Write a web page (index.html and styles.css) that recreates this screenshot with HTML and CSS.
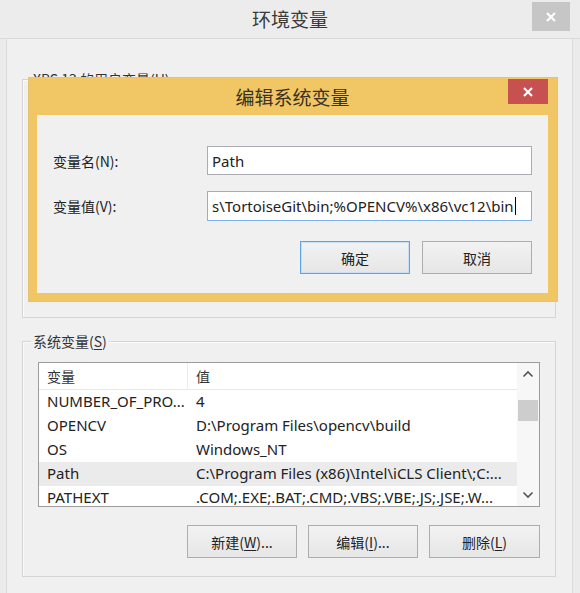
FILE: index.html
```html
<!DOCTYPE html>
<html lang="zh-CN">
<head>
<meta charset="utf-8">
<title>环境变量</title>
<link rel="stylesheet" href="styles.css">
</head>
<body>
<div class="window">
  <div class="titlebar">
    <span class="title">环境变量</span>
    <span class="close-outer">
      <svg width="12" height="12" viewBox="0 0 12 12"><path d="M2 2 L10 10 M10 2 L2 10" stroke="#fff" stroke-width="2.2"/></svg>
    </span>
  </div>
  <div class="panel">
    <div class="group group-user">
      <span class="group-label">XPS 13 的用户变量(<u>U</u>)</span>
    </div>
    <div class="group group-sys">
      <span class="group-label">系统变量(<u>S</u>)</span>
      <div class="listview">
        <div class="list-main">
          <div class="row header"><span class="c1">变量</span><span class="c2">值</span></div>
          <div class="row"><span class="c1">NUMBER_OF_PRO...</span><span class="c2">4</span></div>
          <div class="row"><span class="c1">OPENCV</span><span class="c2">D:\Program Files\opencv\build</span></div>
          <div class="row"><span class="c1">OS</span><span class="c2">Windows_NT</span></div>
          <div class="row selected"><span class="c1">Path</span><span class="c2">C:\Program Files (x86)\Intel\iCLS Client\;C:...</span></div>
          <div class="row"><span class="c1">PATHEXT</span><span class="c2">.COM;.EXE;.BAT;.CMD;.VBS;.VBE;.JS;.JSE;.W...</span></div>
        </div>
        <div class="scrollbar">
          <span class="arrow">
            <svg width="12" height="8" viewBox="0 0 12 8"><polyline points="1.5,6.5 6,2 10.5,6.5" fill="none" stroke="#555" stroke-width="1.6"/></svg>
          </span>
          <span class="track"><span class="thumb"></span></span>
          <span class="arrow">
            <svg width="12" height="8" viewBox="0 0 12 8"><polyline points="1.5,1.5 6,6 10.5,1.5" fill="none" stroke="#555" stroke-width="1.6"/></svg>
          </span>
        </div>
      </div>
      <div class="btn-row">
        <button class="btn">新建(<u>W</u>)...</button>
        <button class="btn">编辑(<u>I</u>)...</button>
        <button class="btn">删除(<u>L</u>)</button>
      </div>
    </div>
  </div>

  <div class="dialog">
    <div class="dlg-titlebar">
      <span class="dlg-title">编辑系统变量</span>
      <span class="close-red">
        <svg width="12" height="12" viewBox="0 0 12 12"><path d="M2 2 L10 10 M10 2 L2 10" stroke="#fff" stroke-width="2.2"/></svg>
      </span>
    </div>
    <div class="dlg-body">
      <div class="form">
        <label class="form-label">变量名(N):</label>
        <div class="input">Path</div>
        <label class="form-label">变量值(V):</label>
        <div class="input focused"><span class="val">s\TortoiseGit\bin;%OPENCV%\x86\vc12\bin</span><span class="caret"></span></div>
      </div>
      <div class="dlg-buttons">
        <button class="btn default">确定</button>
        <button class="btn">取消</button>
      </div>
    </div>
  </div>
</div>
</body>
</html>
```

FILE: styles.css
```css
* { box-sizing: border-box; }
html, body {
  margin: 0;
  padding: 0;
}
body {
  width: 580px;
  height: 593px;
  overflow: hidden;
  background: #ebebeb;
  font-family: "Noto Sans", "Noto Sans CJK SC", sans-serif;
  font-size: 14px;
  color: #1e1e1e;
}
u { text-decoration: underline; text-underline-offset: 2px; }

.window {
  position: relative;
  width: 580px;
  height: 593px;
  display: flex;
  flex-direction: column;
}

.titlebar {
  position: relative;
  height: 39px;
  flex: none;
  display: flex;
  align-items: center;
  justify-content: center;
  background: #ececec;
  border-bottom: 1px solid #dadada;
}
.title {
  font-family: "Noto Sans CJK SC", sans-serif;
  font-size: 19px;
  color: #3a3a3a;
  margin-top: -2px;
}
.close-outer {
  position: absolute;
  right: 10px;
  top: 2px;
  width: 38px;
  height: 29px;
  background: #c6c6c6;
  display: flex;
  align-items: center;
  justify-content: center;
}

.panel {
  flex: 1;
  margin: 0 7px 0 6px;
  background: #f0f0f0;
  border-left: 1px solid #dcdcdc;
  border-right: 1px solid #dcdcdc;
  display: flex;
  flex-direction: column;
  padding: 0 16px 0 15px;
}

.group {
  position: relative;
  border: 1px solid #d5d5d5;
  box-shadow: inset 1px 1px 0 #fafafa;
}
.group-label {
  position: absolute;
  top: -11px;
  left: 8px;
  padding: 0 2px;
  background: #f0f0f0;
  font-family: "Noto Sans CJK SC", sans-serif;
  font-size: 14px;
  line-height: 20px;
  color: #333;
}
.group-user {
  margin-top: 40px;
  height: 239px;
}
.group-sys {
  margin-top: 23px;
  height: 236px;
  padding: 20px 15px 0 15px;
}

.listview {
  height: 145px;
  border: 1px solid #9c9c9c;
  background: #fff;
  display: flex;
}
.list-main {
  flex: 1;
  overflow: hidden;
}
.row {
  height: 24px;
  display: flex;
  align-items: center;
  padding-bottom: 2px;
  white-space: nowrap;
  font-size: 15px;
  color: #222;
}
.row.header {
  height: 27px;
  padding-bottom: 0;
  border-bottom: 1px solid #e8e8e8;
  font-family: "Noto Sans CJK SC", sans-serif;
  font-size: 14px;
  color: #333;
}
.row.header .c1 { border-right: 1px solid #ececec; align-self: stretch; display: flex; align-items: center; }
.row.selected { background: #ebebeb; }
.c1 {
  width: 149px;
  padding-left: 8px;
  flex: none;
}
.c2 {
  padding-left: 8px;
}

.scrollbar {
  width: 22px;
  flex: none;
  background: #f7f7f7;
  display: flex;
  flex-direction: column;
  padding: 0 1px;
}
.arrow {
  height: 22px;
  flex: none;
  display: flex;
  align-items: center;
  justify-content: center;
}
.track {
  flex: 1;
  padding-top: 15px;
}
.thumb {
  display: block;
  height: 21px;
  background: #cdcdcd;
}

.btn-row {
  margin-top: 18px;
  display: flex;
  justify-content: flex-end;
  gap: 11px;
}
.btn {
  width: 110px;
  height: 33px;
  border: 1px solid #adadad;
  background: linear-gradient(#f2f2f2, #e6e6e6);
  font-family: "Noto Sans CJK SC", sans-serif;
  font-size: 14px;
  color: #222;
  padding: 0;
}
.btn-row .btn:last-child { width: 111px; }
.btn.default {
  border-color: #5fa3e0;
  box-shadow: inset 0 0 0 1px #c6e0f7;
}

/* overlaying edit dialog */
.dialog {
  position: absolute;
  left: 29px;
  top: 78px;
  width: 528px;
  height: 223px;
  background: #f1c664;
  display: flex;
  flex-direction: column;
  padding: 0 9px 8px 8px;
  box-shadow: 0 0 0 1px #e7c175;
}
.dlg-titlebar {
  position: relative;
  height: 37px;
  flex: none;
  display: flex;
  align-items: center;
  justify-content: center;
}
.dlg-title {
  font-family: "Noto Sans CJK SC", sans-serif;
  font-size: 19px;
  color: #3b3222;
  margin-top: -1px;
}
.close-red {
  position: absolute;
  right: 0;
  top: 1px;
  width: 40px;
  height: 25px;
  background: #c75050;
  display: flex;
  align-items: center;
  justify-content: center;
}
.dlg-body {
  flex: 1;
  background: #f0f0f0;
  padding: 31px 16px 0 16px;
}
.form {
  display: grid;
  grid-template-columns: 154px 325px;
  grid-template-rows: 29px 30px;
  row-gap: 16px;
  align-items: center;
}
.form-label {
  font-family: "Noto Sans CJK SC", sans-serif;
  font-size: 14px;
  color: #222;
}
.input {
  height: 100%;
  border: 1px solid #abadb3;
  background: #fff;
  font-size: 15px;
  color: #222;
  padding: 0 4px;
  display: flex;
  align-items: center;
  white-space: nowrap;
  overflow: hidden;
}
.input.focused {
  border-color: #7eb4ea;
}
.caret {
  display: inline-block;
  width: 1px;
  height: 18px;
  background: #000;
  margin-left: 1px;
}
.dlg-buttons {
  margin-top: 20px;
  display: flex;
  justify-content: flex-end;
  gap: 12px;
}
```
